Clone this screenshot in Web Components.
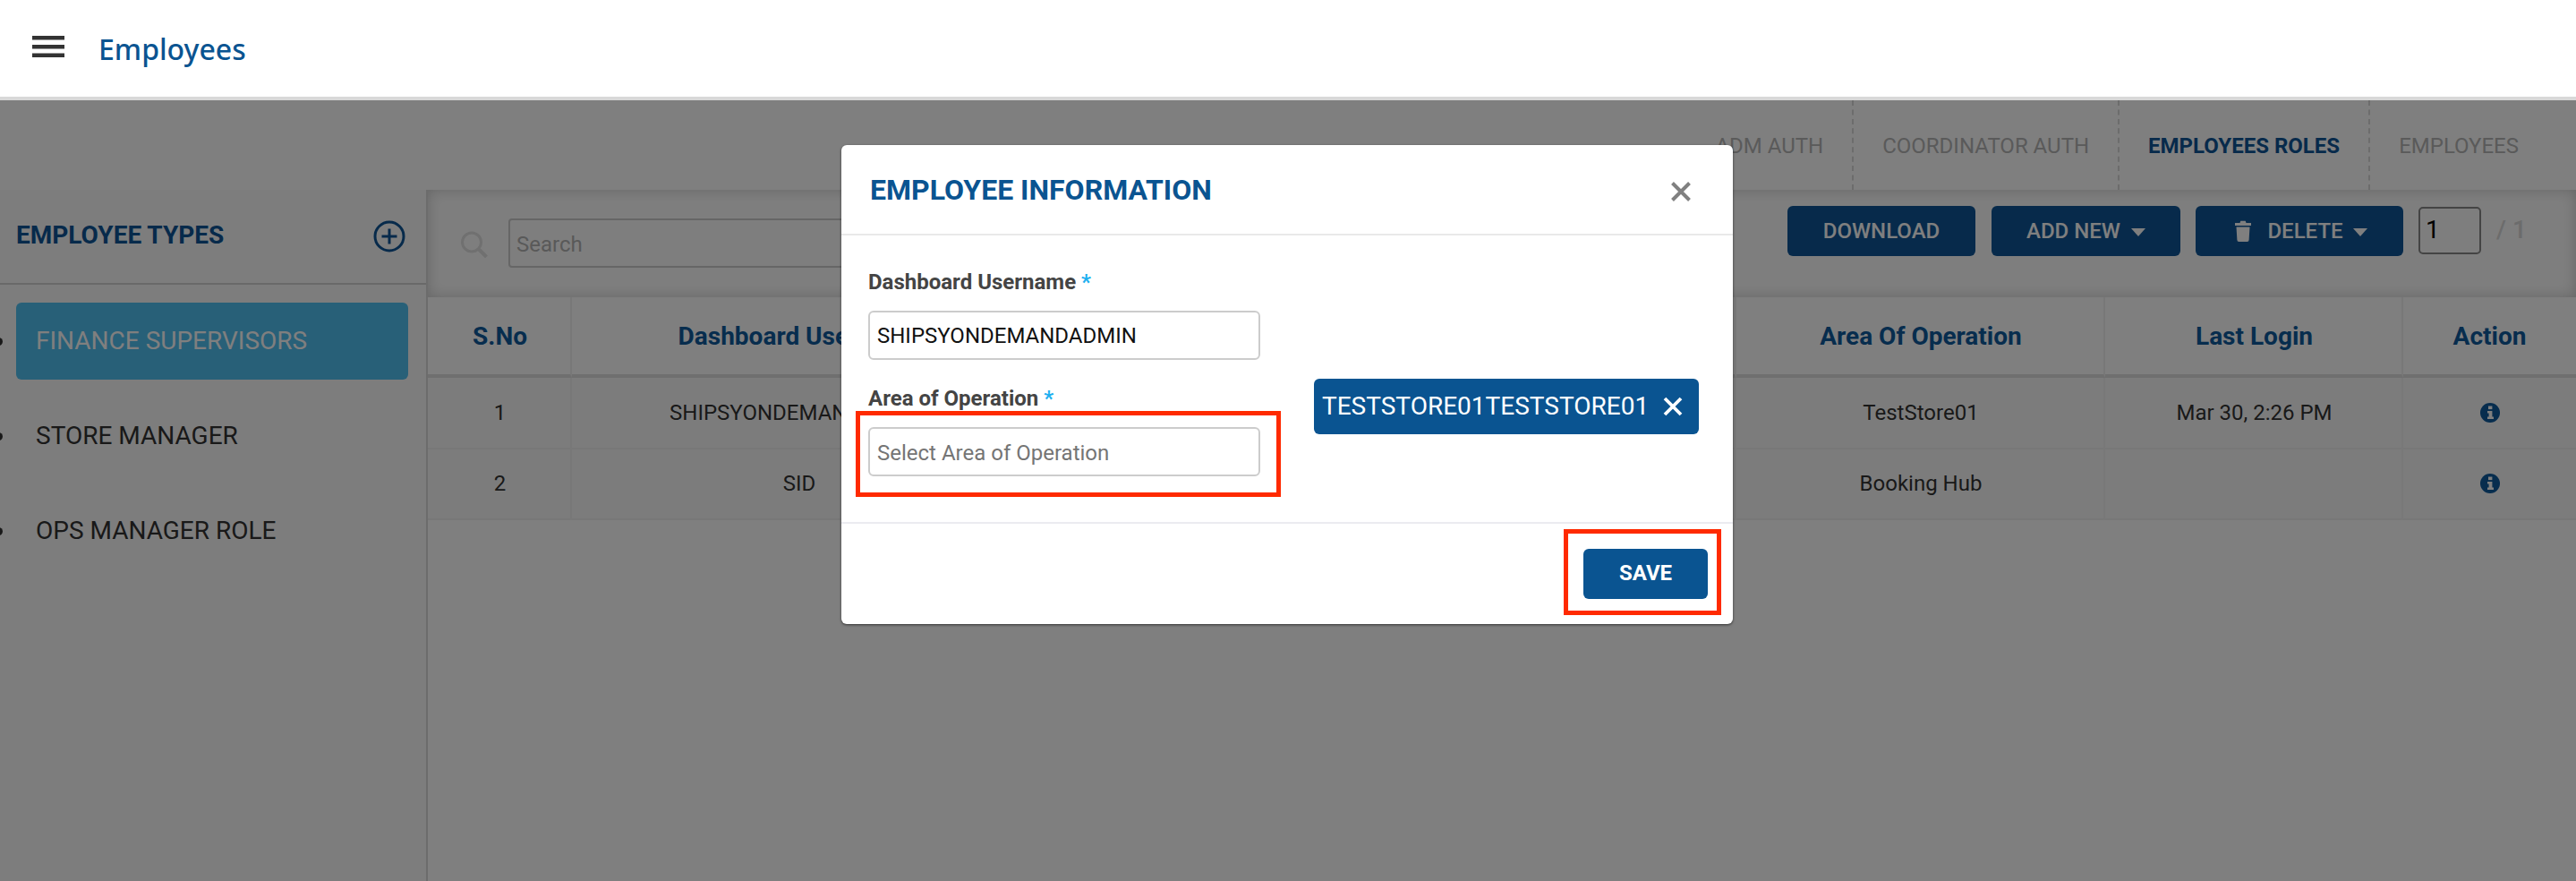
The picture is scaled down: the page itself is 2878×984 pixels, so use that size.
<!DOCTYPE html>
<html><head><meta charset="utf-8">
<style>
html,body{margin:0;padding:0;background:#fff;}
body{font-family:Roboto,"Liberation Sans",sans-serif;width:2878px;height:984px;overflow:hidden;position:relative;}
</style></head>
<body>
<app-shell></app-shell>
<script>
function el(name,css,html){
  customElements.define(name,class extends HTMLElement{
    constructor(){super();const r=this.attachShadow({mode:'open'});r.innerHTML='<style>'+css+'</style>'+html;}
  });
}
const BLUE='#0a5491', NAVY='#0e5596', HEAD='#0f5a9c';
el('app-header',`:host{display:flex;align-items:center;height:108px;background:#fff;border-bottom:4px solid #d8d8d8;position:relative;z-index:3;flex:none}
svg{margin-left:36px;display:block;position:relative;top:-2px}
h1{margin:0 0 0 38px;font:500 32px/1 "Noto Sans",sans-serif;color:${BLUE};position:relative;top:1px}`,
`<svg width="36" height="24" viewBox="0 0 36 24"><g fill="#333"><rect width="36" height="4.500" y="0"/><rect width="36" height="4.500" y="10"/><rect width="36" height="4.500" y="19.500"/></g></svg><h1>Employees</h1>`);

el('tab-bar',`:host{display:flex;justify-content:flex-end;height:100px;padding-right:32px;flex:none}`,`<slot></slot>`);
el('tab-item',`:host{display:flex;align-items:center;box-sizing:border-box;padding:2px 32px 0;font:400 24px/1 Roboto,sans-serif;color:#b4b4b4;border-left:2px dashed #d8d8d8;}
:host(:first-child){border-left:0}
:host([active]){font-weight:700;color:${NAVY}}`,`<slot></slot>`);

el('side-bar',`:host{display:block;width:476px;border-right:2px solid #d8d8d8;flex:none;overflow:hidden;background:#fafafa}
header{display:flex;justify-content:space-between;align-items:center;height:104px;box-sizing:content-box;border-bottom:2px solid #d2d2d2;padding:0 23px 0 18px}
h2{margin:0;font:700 28px/1 Roboto,sans-serif;color:${NAVY};position:relative;top:-1px}
ul{margin:0;padding:20px 20px 0 18px;list-style:disc}`,
`<header><h2>EMPLOYEE TYPES</h2><svg width="36" height="36" viewBox="0 0 36 36" fill="none" stroke="${NAVY}" stroke-width="3"><circle cx="18" cy="18" r="16"/><path d="M18 9.500v17M9.500 18h17"/></svg></header><ul><slot></slot></ul>`);
el('type-item',`:host{display:list-item;height:86px;margin-bottom:20px;border-radius:6px;color:#333;font:400 28px/85px Roboto,sans-serif;padding-left:22px}
:host([active]){background:#50c0f0}
:host([active]) span{color:#fff}`,`<span><slot></slot></span>`);

el('btn-x',`:host{display:inline-flex;align-items:center;justify-content:center;box-sizing:border-box;gap:12px;height:56px;background:${NAVY};border-radius:6px;color:#fff;font:500 24px/1 Roboto,sans-serif;flex:none}`,`<slot></slot>`);
el('caret-i',`:host{display:inline-block;width:0;height:0;border-left:8px solid transparent;border-right:8px solid transparent;border-top:9px solid #fff;margin-top:2px}`,``);

el('tool-bar',`:host{display:flex;align-items:flex-start;height:120px;box-sizing:border-box;background:#fdfdfd;box-shadow:inset 0 0 16px rgba(0,0,0,.2);flex:none}
.l{display:flex;align-items:center;margin:32px 0 0 37px}
.l svg{display:block}
.s{display:flex;align-items:center;width:1000px;height:55px;box-sizing:border-box;border:2px solid #ccc;border-radius:4px;margin-left:23px;padding:2px 0 0 7px;font:400 24px/1 Roboto,sans-serif;color:#b3b3b3}
.r{margin:18px 0 0 auto;display:flex;align-items:flex-start;padding-right:58px}
.p{width:70px;height:53px;margin-top:1px;box-sizing:border-box;border:2px solid #888;border-radius:5px;padding-left:6px;font:400 28px/47px Roboto,sans-serif;color:#000;margin-right:17px}
.t{width:31px;white-space:nowrap;font:500 28px/54px Roboto,sans-serif;color:#d8d8d8}
`,`<div class="l"><svg width="30" height="32" viewBox="0 0 30 32" fill="none" stroke="#e0e0e0"><circle cx="12" cy="14.500" r="10.500" stroke-width="3"/><path d="M20 22.500l8.500 8.500" stroke-width="4"/></svg><div class="s">Search</div></div>
<div class="r"><btn-x style="width:210px;margin-right:18px">DOWNLOAD</btn-x><btn-x style="width:211px;margin-right:17px">ADD NEW <caret-i></caret-i></btn-x><btn-x style="width:232px;margin-right:17px;padding-left:4px;gap:11px"><svg width="18" height="24" viewBox="0 0 18 24" fill="#fff" style="margin-right:7px"><path d="M0 3h5.500l.8-2.200h5.400l.8 2.200H18v3H0zM1.500 7.500h15l-.9 14.500a2 2 0 0 1-2 2H4.400a2 2 0 0 1-2-2z"/></svg>DELETE <caret-i></caret-i></btn-x><div class="p">1</div><div class="t">/ 1</div></div>`);

el('data-table',`:host{display:block;flex:none}
.g{display:grid;grid-template-columns:161px 508px 793px 412px 333px 193px}
.c{display:flex;align-items:center;justify-content:center;height:77.500px;padding-left:2px;border-right:2px solid #f0f0f0;border-bottom:2px solid #f0f0f0;font:400 24px/1 Roboto,sans-serif;color:#333;white-space:nowrap;overflow:hidden;background:#f9f9f9}
.h{height:84px;padding-top:2px;border-bottom:4px solid #dedede;font:700 28px/1 Roboto,sans-serif;color:${HEAD};background:#fff}
.x{border-right:0;padding-left:0}
`,`<div class="g">
<div class="c h">S.No</div><div class="c h">Dashboard Username</div><div class="c h"></div><div class="c h">Area Of Operation</div><div class="c h">Last Login</div><div class="c h x">Action</div>
<div class="c">1</div><div class="c">SHIPSYONDEMANDADMIN</div><div class="c"></div><div class="c">TestStore01</div><div class="c">Mar 30, 2:26 PM</div><div class="c x"><info-i></info-i></div>
<div class="c">2</div><div class="c">SID</div><div class="c"></div><div class="c">Booking Hub</div><div class="c"></div><div class="c x"><info-i></info-i></div>
</div>`);
el('info-i',`:host{display:block;width:22px;height:22px}svg{display:block}`,`<svg width="22" height="22" viewBox="0 0 22 22"><circle cx="11" cy="11" r="11" fill="${HEAD}"/><g fill="#fff"><rect x="9" y="3.500" width="4.400" height="3.600"/><path d="M8 9h5.400v6.500H15V18H8v-2.500h1.600v-4H8z"/></g></svg>`);

el('form-field',`:host{display:block}
label{display:block;font:700 24px/1 Roboto,sans-serif;color:#444}
i{font-style:normal;color:#1eb0f0;font-weight:700}
.v{margin-top:20px;height:55px;width:438px;box-sizing:border-box;border:2px solid #ccc;border-radius:6px;padding:1px 0 0 8px;font:400 24px/51px Roboto,sans-serif;color:#111}
:host([ph]) .v{color:#757575;padding-top:2px;line-height:50px}`,
`<label><slot name="l"></slot> <i>*</i></label><div class="v"><slot></slot></div>`);

el('emp-modal',`:host{position:absolute;left:940px;top:162px;width:996px;height:535px;background:#fff;border-radius:6px;z-index:5;display:flex;flex-direction:column;box-shadow:0 1px 3px rgba(0,0,0,.6)}
header{height:101px;box-sizing:border-box;flex:none;border-bottom:2px solid #e9e9e9;display:flex;align-items:center;justify-content:space-between;padding:0 47px 0 32px}
h3{margin:0;font:700 32px/1 Roboto,sans-serif;color:${BLUE}}
header svg{position:relative;top:2px}
main{flex:none;height:320px;border-bottom:2px solid #ebebf0;display:flex;padding:0 38px 0 30px;position:relative}
.col{padding-top:40px;display:flex;flex-direction:column;gap:31px}
.chip{margin:160px 0 0 60px;width:430px;height:62px;background:${BLUE};border-radius:6px;color:#fff;font:400 28px/1 Roboto,sans-serif;display:flex;align-items:center;justify-content:space-between;padding:0 17px 0 9px;box-sizing:border-box}
footer{flex:1;display:flex;align-items:flex-start;justify-content:flex-end;padding:28px 28px 0 0}
.save{width:139px;height:56px;background:${BLUE};color:#fff;border-radius:6px;font:700 24px/55px Roboto,sans-serif;text-align:center}
`,`<header><h3>EMPLOYEE INFORMATION</h3><svg width="22" height="22" viewBox="0 0 22 22" stroke="#808080" stroke-width="4" fill="none"><path d="M1.500 1.500l19 19M20.500 1.500l-19 19"/></svg></header>
<main><div class="col"><form-field><span slot="l">Dashboard Username</span>SHIPSYONDEMANDADMIN</form-field><form-field ph><span slot="l">Area of Operation</span>Select Area of Operation</form-field></div>
<div class="chip"><span>TESTSTORE01TESTSTORE01</span><svg width="24" height="24" viewBox="0 0 24 24" stroke="#fff" stroke-width="3.800" fill="none"><path d="M3 3l18 18M21 3L3 21"/></svg></div></main>
<footer><div class="save">SAVE</div></footer>`);

el('mark-box',`:host{position:absolute;box-sizing:border-box;border:5px solid #ff2a00;z-index:6;display:block}`,``);

el('app-shell',`:host{display:flex;flex-direction:column;width:2878px;height:984px;position:relative;overflow:hidden}
.body{display:flex;flex:1;min-height:0}
.panel{flex:1;display:flex;flex-direction:column;min-width:0;overflow:hidden}
.ov{position:absolute;left:0;right:0;top:112px;bottom:0;background:rgba(0,0,0,.5);z-index:2}`,
`<app-header></app-header>
<tab-bar><tab-item>ADM AUTH</tab-item><tab-item>COORDINATOR AUTH</tab-item><tab-item active>EMPLOYEES ROLES</tab-item><tab-item>EMPLOYEES</tab-item></tab-bar>
<div class="body"><side-bar><type-item active>FINANCE SUPERVISORS</type-item><type-item>STORE MANAGER</type-item><type-item>OPS MANAGER ROLE</type-item></side-bar>
<div class="panel"><tool-bar></tool-bar><data-table></data-table></div></div>
<div class="ov"></div>
<emp-modal></emp-modal>
<mark-box style="left:956px;top:459px;width:475px;height:96px"></mark-box>
<mark-box style="left:1747px;top:591px;width:176px;height:96px"></mark-box>`);
</script>
</body></html>
